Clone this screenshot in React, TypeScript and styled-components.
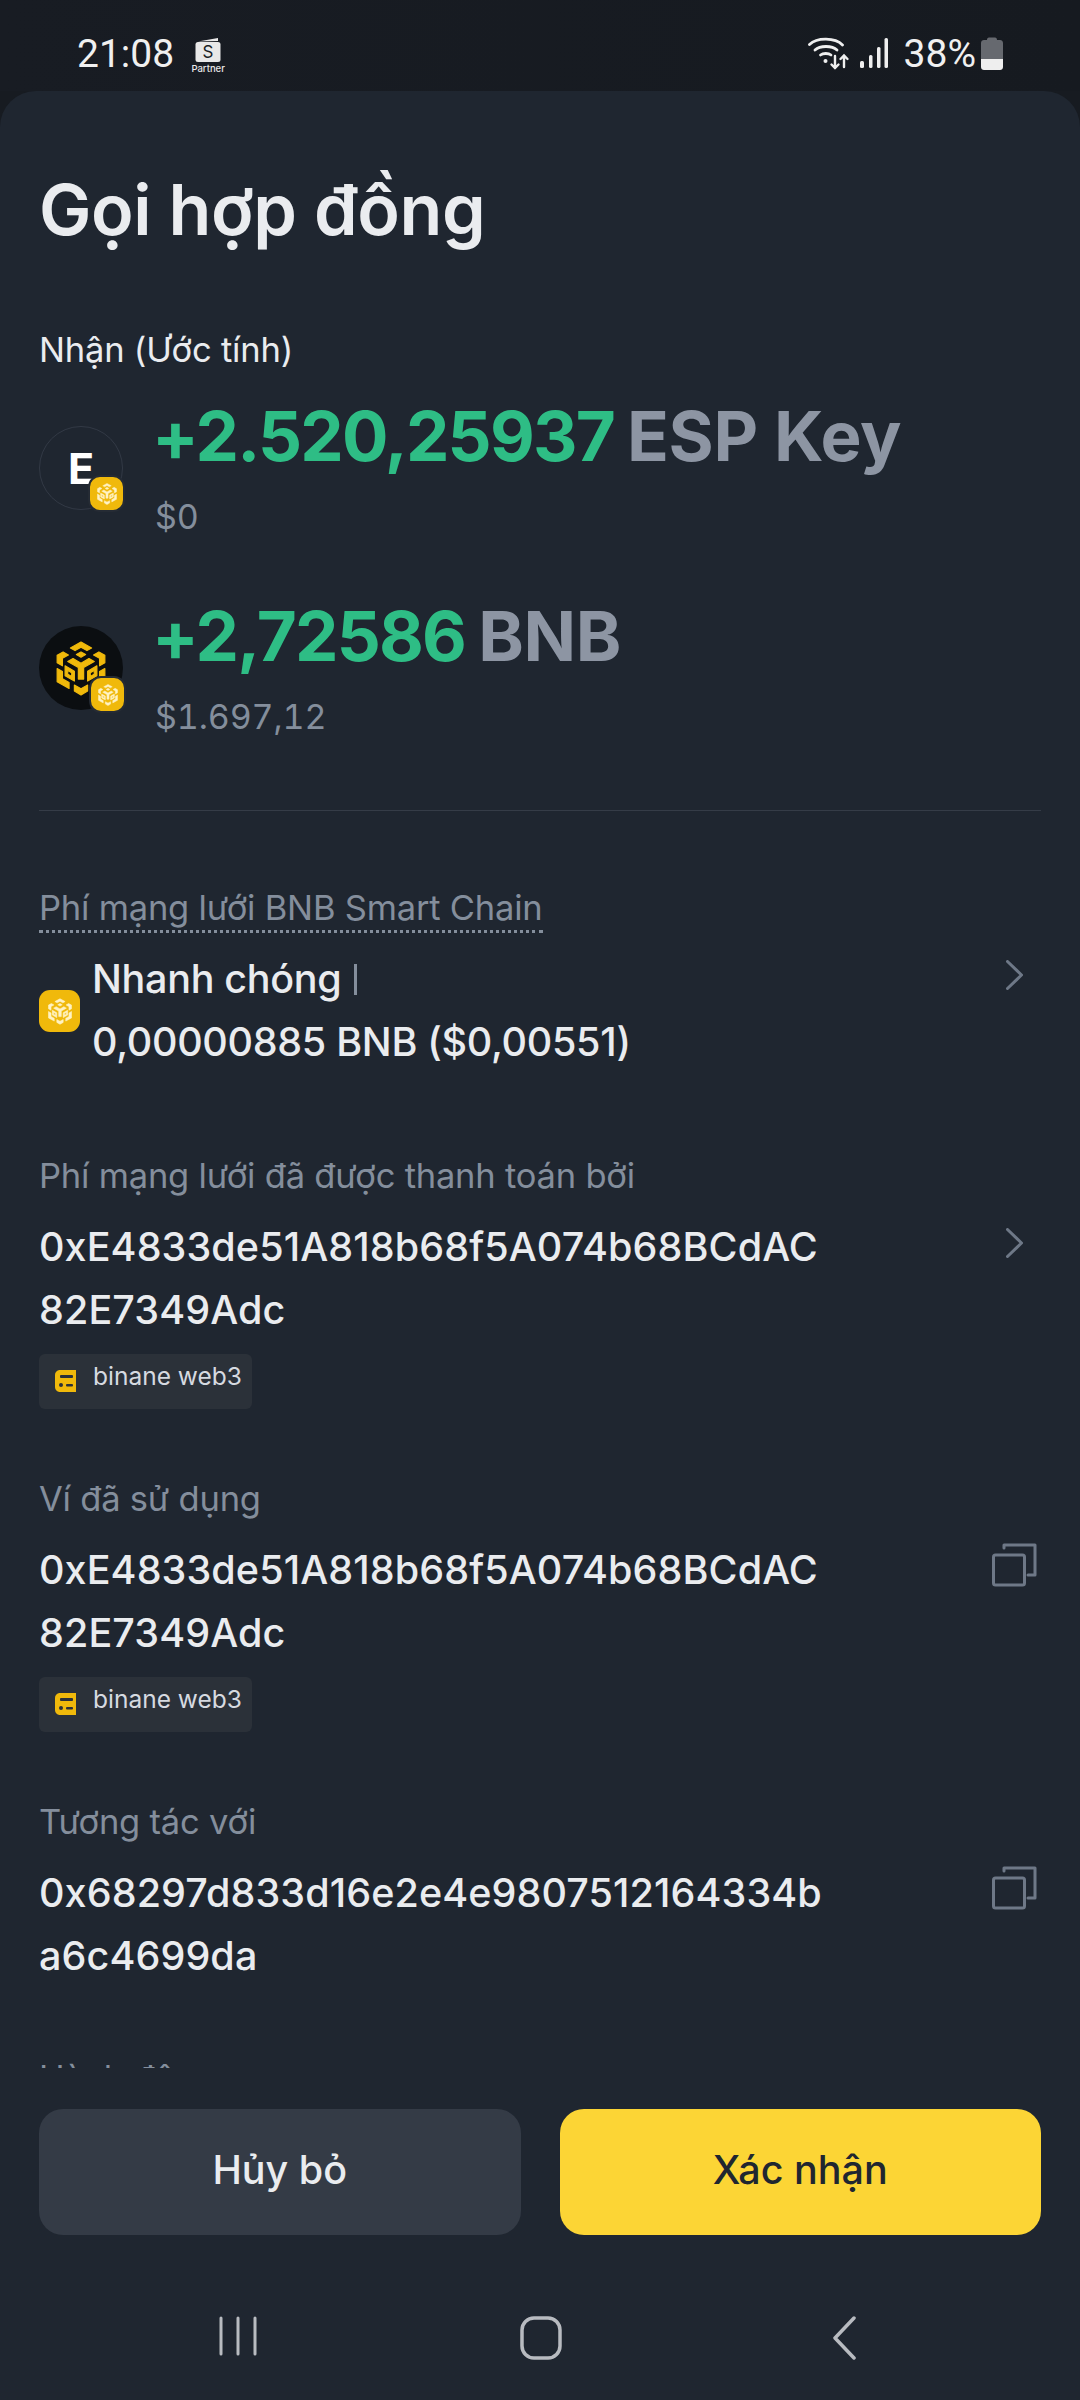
import React from "react";
import styled, { createGlobalStyle } from "styled-components";

const Global = createGlobalStyle`
  html, body { margin: 0; padding: 0; background: #171b21; }
  body { font-family: Inter, "Liberation Sans", sans-serif; }
  * { box-sizing: border-box; }
`;

const Page = styled.div`
  width: 1080px;
  height: 2400px;
  display: flex;
  flex-direction: column;
  overflow: hidden;
  background: #171b21;
`;

const StatusBar = styled.header`
  height: 91px;
  flex: none;
  display: flex;
  align-items: center;
  padding: 15px 77px 0 77px;
  color: #f0f0f0;
  font-family: Roboto, sans-serif;
  font-size: 39px;
  background: linear-gradient(90deg, #181c23, #161a20);
`;

const Clock = styled.span`
  margin-top: 2px;
  line-height: 46px;
`;

const PartnerBadge = styled.div`
  margin-left: 16px;
  width: 36px;
  display: flex;
  flex-direction: column;
  align-items: center;
  margin-top: 4px;
`;

const PartnerText = styled.span`
  font-family: Inter, sans-serif;
  font-size: 9.5px;
  line-height: 11px;
  font-weight: 500;
  margin-top: 1px;
  color: #e8e8e8;
`;

const Spacer = styled.div`
  flex: 1;
`;

const SignalSlot = styled.span`
  margin-left: 10px;
  display: flex;
`;

const Percent = styled.span`
  margin: 2px 5px 0 16px;
  line-height: 46px;
`;

const Sheet = styled.main`
  flex: 1;
  display: flex;
  flex-direction: column;
  background: #1f2630;
  border-radius: 36px 36px 0 0;
`;

const Scroller = styled.section`
  height: 1977px;
  flex: none;
  overflow: hidden;
  padding: 77px 39px 0;
`;

const Title = styled.h1`
  margin: 0;
  font-size: 70px;
  line-height: 84px;
  font-weight: 600;
  letter-spacing: -0.35px;
  color: #eaecef;
`;

const Receive = styled.div`
  margin-top: 74px;
  font-size: 34.500px;
  line-height: 48px;
  color: #eaecef;
  letter-spacing: -0.2px;
`;

const AssetRow = styled.div<{ $gap: number }>`
  display: flex;
  align-items: center;
  gap: 33px;
  margin-top: ${(p) => p.$gap}px;
`;

const Coin = styled.div<{ $dark?: boolean }>`
  position: relative;
  width: 84px;
  height: 84px;
  flex: none;
  border-radius: 50%;
  display: flex;
  align-items: center;
  justify-content: center;
  color: #fff;
  font-size: 43px;
  font-weight: 700;
  background: ${(p) => (p.$dark ? "#0b0e11" : "transparent")};
  border: ${(p) => (p.$dark ? "none" : "1.5px solid #323945")};
`;

const ChainBadge = styled.div`
  position: absolute;
  right: -3px;
  bottom: -3px;
  width: 37px;
  height: 37px;
  border-radius: 12px;
  background: #f0b90b;
  border: 2.500px solid #252b34;
  display: flex;
  align-items: center;
  justify-content: center;
`;

const Amounts = styled.div`
  display: flex;
  flex-direction: column;
  margin-left: -4px;
`;

const AmountLine = styled.div`
  display: flex;
  gap: 13px;
  font-size: 69px;
  line-height: 84px;
  font-weight: 700;
`;

const Delta = styled.span`
  color: #2ebd85;
  letter-spacing: -1.8px;
`;

const Symbol = styled.span`
  color: #8d95a3;
  letter-spacing: -0.3px;
`;

const Usd = styled.div`
  margin: 14px 0 0 3px;
  font-size: 34px;
  line-height: 50px;
  color: #848e9c;
  font-variant-numeric: tabular-nums;
  letter-spacing: -0.1px;
`;

const Divider = styled.hr`
  margin: 68px 0 0;
  border: 0;
  border-top: 1px solid #353c47;
`;

const Label = styled.div<{ $gap: number }>`
  margin-top: ${(p) => p.$gap}px;
  font-size: 34.500px;
  line-height: 48px;
  color: #848e9c;
  letter-spacing: -0.2px;
`;

const Dotted = styled.span`
  padding-bottom: 2px;
  border-bottom: 3px dotted #848e9c;
`;

const ValueRow = styled.div`
  display: flex;
  align-items: flex-start;
  justify-content: space-between;
  margin-top: 16px;
`;

const FeeBody = styled.div`
  display: flex;
  align-items: center;
  gap: 12px;
`;

const FeeIcon = styled.div`
  width: 41px;
  height: 42px;
  flex: none;
  border-radius: 11px;
  background: #f0b90b;
  display: flex;
  align-items: center;
  justify-content: center;
`;

const Value = styled.div`
  font-size: 39.500px;
  line-height: 63px;
  font-weight: 500;
  color: #eaecef;
  letter-spacing: -0.3px;
`;

const Address = styled(Value)`
  width: 795px;
  word-break: break-all;
  letter-spacing: 0.1px;
`;

const Bar = styled.span`
  display: inline-block;
  width: 3px;
  height: 31px;
  margin-left: 2px;
  vertical-align: -2px;
  background: #848e9c;
`;

const Chevron = styled.svg<{ $top: number }>`
  flex: none;
  margin: ${(p) => p.$top}px 18px 0 0;
`;

const CopyIcon = styled.svg`
  flex: none;
  margin: 4px 4px 0 0;
`;

const WalletChip = styled.div`
  margin-top: 12px;
  width: 213px;
  height: 55px;
  border-radius: 6px;
  background: #2b3139;
  display: flex;
  align-items: flex-start;
  padding: 7px 0 0 16px;
  gap: 17px;
  font-size: 24.500px;
  line-height: 30px;
  color: #d6dae0;
`;

const ChipGlyph = styled.svg`
  margin-top: 9px;
  flex: none;
`;

const Actions = styled.div`
  display: grid;
  grid-template-columns: 1fr 1fr;
  gap: 39px;
  padding: 41px 39px 0;
`;

const ActionButton = styled.button<{ $primary?: boolean }>`
  height: 126px;
  border: 0;
  border-radius: 24px;
  padding: 0 0 4px;
  font-family: inherit;
  font-size: 39.500px;
  font-weight: 500;
  background: ${(p) => (p.$primary ? "#fcd535" : "#343b46")};
  color: ${(p) => (p.$primary ? "#202630" : "#eaecef")};
`;

const NavBar = styled.nav`
  height: 165px;
  display: grid;
  grid-template-columns: repeat(3, 1fr);
  align-items: start;
  justify-items: center;
  padding: 81px 85px 0 87px;
`;

// BNB Chain cube, used both as the coin artwork and inside the chain badges.
const BnbMark = ({ w, h, fill }: { w: number; h: number; fill: string }) => (
  <svg width={w} height={h} viewBox="-3 -3 150 166" fill={fill} stroke={fill} strokeWidth="3.500" strokeLinejoin="round">
    <path d="M72 0l32 18-14 8-18-10-18 10-14-8z" />
    <path d="M72 30l14 8-14 8-14-8z" />
    <path d="M18 30l16 9-18 10v23L0 63V40z" />
    <path d="M126 30l-16 9 18 10v23l16-9V40z" />
    <path d="M48 50l24 14 24-14 16 9-32 18v35H64V77L32 59z" />
    <path d="M0 80l16 9v22l20 11v18L0 120z" />
    <path d="M144 80l-16 9v22l-20 11v18l36-20z" />
    <path fillRule="evenodd" d="M24 72l28 16v30L24 102zm8 14v11l12 7V93z" />
    <path fillRule="evenodd" d="M120 72L92 88v30l28-16zm-8 14v11l-12 7V93z" />
    <path d="M52 130l20 11 20-11v18l-20 12-20-12z" />
  </svg>
);

const WalletGlyph = () => (
  <svg width="26" height="25" viewBox="0 0 26 25">
    <path d="M3 4.500L23 1v3z" fill="#e8e8e8" />
    <rect x="0.500" y="5" width="25" height="20" rx="2.500" fill="#e8e8e8" />
    <text x="13" y="21" textAnchor="middle" fontFamily="Inter" fontSize="17" fill="#1a1e25">
      S
    </text>
  </svg>
);

const WifiGlyph = () => (
  <svg width="42" height="33" viewBox="0 0 42 33" fill="none" stroke="#efefef" strokeLinecap="round">
    <path d="M1.500 7.500C9 .3 27 .3 34.500 8" strokeWidth="2.800" />
    <path d="M7 13c5-4.700 17-4.700 22 0" strokeWidth="2.800" />
    <path d="M12.500 18c2.500-2 8-2 10.500 0" strokeWidth="2.800" />
    <circle cx="17.500" cy="24" r="2" fill="#efefef" stroke="none" />
    <path d="M27 19v12M23.500 27.500l3.500 3.500 3.500-3.500" strokeWidth="2.400" />
    <path d="M36 30V18.500M32.500 22l3.500-3.500 3.500 3.500" strokeWidth="2.400" />
  </svg>
);

const SignalGlyph = () => (
  <svg width="28" height="30" viewBox="0 0 28 30" fill="#efefef">
    <rect x="0" y="23" width="4" height="7" rx="1.500" />
    <rect x="9" y="17" width="3.500" height="13" rx="1.500" />
    <rect x="17" y="9" width="3.500" height="21" rx="1.500" />
    <rect x="24.500" y="0" width="3.500" height="30" rx="1.500" />
  </svg>
);

const BatteryGlyph = () => (
  <svg width="22" height="33" viewBox="0 0 22 33">
    <path d="M6 3c0-1.500.7-2.500 2-2.500h6c1.300 0 2 1 2 2.500h3c1.700 0 3 1.300 3 3v16H0V6c0-1.700 1.300-3 3-3z" fill="#66696f" />
    <path d="M0 22h22v8c0 1.700-1.300 3-3 3H3c-1.700 0-3-1.300-3-3z" fill="#eeeeee" />
  </svg>
);

const ChevronGlyph = ({ top }: { top: number }) => (
  <Chevron $top={top} width="17" height="30" viewBox="0 0 17 30" fill="none" stroke="#6e7887" strokeWidth="3" strokeLinecap="round" strokeLinejoin="round">
    <path d="M1.500 1.500L15.500 15 1.500 28.500" />
  </Chevron>
);

const CopyGlyph = () => (
  <CopyIcon width="45" height="44" viewBox="0 0 45 44" fill="none" stroke="#6e7887" strokeWidth="3" strokeLinejoin="round" strokeLinecap="round">
    <rect x="1.500" y="12" width="31" height="30" rx="2" />
    <path d="M12 5V2h31v30H36" />
  </CopyIcon>
);

const ChipIcon = () => (
  <ChipGlyph width="21" height="22" viewBox="0 0 21 22">
    <path d="M5 0h16v22H5c-2.800 0-5-2.200-5-5V5c0-2.800 2.200-5 5-5z" fill="#f0b90b" />
    <rect x="5" y="5" width="13" height="3" rx="1" fill="#2b3139" />
    <circle cx="6" cy="15" r="2" fill="#2b3139" />
    <rect x="11" y="14" width="7" height="2.500" rx="1" fill="#2b3139" />
  </ChipGlyph>
);

const wallet = "0xE4833de51A818b68f5A074b68BCdAC82E7349Adc";

export default function App() {
  return (
    <Page>
      <Global />
      <StatusBar>
        <Clock>21:08</Clock>
        <PartnerBadge>
          <WalletGlyph />
          <PartnerText>Partner</PartnerText>
        </PartnerBadge>
        <Spacer />
        <WifiGlyph />
        <SignalSlot>
          <SignalGlyph />
        </SignalSlot>
        <Percent>38%</Percent>
        <BatteryGlyph />
      </StatusBar>
      <Sheet>
        <Scroller>
          <Title>Gọi hợp đồng</Title>
          <Receive>Nhận (Ước tính)</Receive>

          <AssetRow $gap={20}>
            <Coin>
              E
              <ChainBadge>
                <BnbMark w={20} h={22} fill="#fff3c4" />
              </ChainBadge>
            </Coin>
            <Amounts>
              <AmountLine>
                <Delta>+2.520,25937</Delta>
                <Symbol>ESP Key</Symbol>
              </AmountLine>
              <Usd>$0</Usd>
            </Amounts>
          </AssetRow>

          <AssetRow $gap={52}>
            <Coin $dark>
              <BnbMark w={50} h={55} fill="#f0b90b" />
              <ChainBadge>
                <BnbMark w={20} h={22} fill="#fff3c4" />
              </ChainBadge>
            </Coin>
            <Amounts>
              <AmountLine>
                <Delta>+2,72586</Delta>
                <Symbol>BNB</Symbol>
              </AmountLine>
              <Usd>$1.697,12</Usd>
            </Amounts>
          </AssetRow>

          <Divider />

          <Label $gap={73}>
            <Dotted>Phí mạng lưới BNB Smart Chain</Dotted>
          </Label>
          <ValueRow>
            <FeeBody>
              <FeeIcon>
                <BnbMark w={24} h={27} fill="#fff3c4" />
              </FeeIcon>
              <Value>
                Nhanh chóng <Bar />
                <br />
                0,00000885 BNB ($0,00551)
              </Value>
            </FeeBody>
            <ChevronGlyph top={12} />
          </ValueRow>

          <Label $gap={78}>Phí mạng lưới đã được thanh toán bởi</Label>
          <ValueRow>
            <Address>{wallet}</Address>
            <ChevronGlyph top={12} />
          </ValueRow>
          <WalletChip>
            <ChipIcon />
            binane web3
          </WalletChip>

          <Label $gap={66}>Ví đã sử dụng</Label>
          <ValueRow>
            <Address>{wallet}</Address>
            <CopyGlyph />
          </ValueRow>
          <WalletChip>
            <ChipIcon />
            binane web3
          </WalletChip>

          <Label $gap={66}>Tương tác với</Label>
          <ValueRow>
            <Address>0x68297d833d16e2e4e9807512164334ba6c4699da</Address>
            <CopyGlyph />
          </ValueRow>

          <Label $gap={66}>Hành động</Label>
        </Scroller>
        <Actions>
          <ActionButton>Hủy bỏ</ActionButton>
          <ActionButton $primary>Xác nhận</ActionButton>
        </Actions>
        <NavBar>
          <svg width="38" height="40" viewBox="0 0 38 40" stroke="#b8bbc0" strokeWidth="3" strokeLinecap="round">
            <path d="M2 2v36M19 2v36M36 2v36" />
          </svg>
          <svg width="42" height="44" viewBox="0 0 42 44" fill="none" stroke="#b8bbc0" strokeWidth="3.500">
            <rect x="2" y="2" width="38" height="40" rx="12" />
          </svg>
          <svg width="24" height="44" viewBox="0 0 24 44" fill="none" stroke="#b8bbc0" strokeWidth="3.500" strokeLinecap="round" strokeLinejoin="round">
            <path d="M22 2L3 22l19 20" />
          </svg>
        </NavBar>
      </Sheet>
    </Page>
  );
}
